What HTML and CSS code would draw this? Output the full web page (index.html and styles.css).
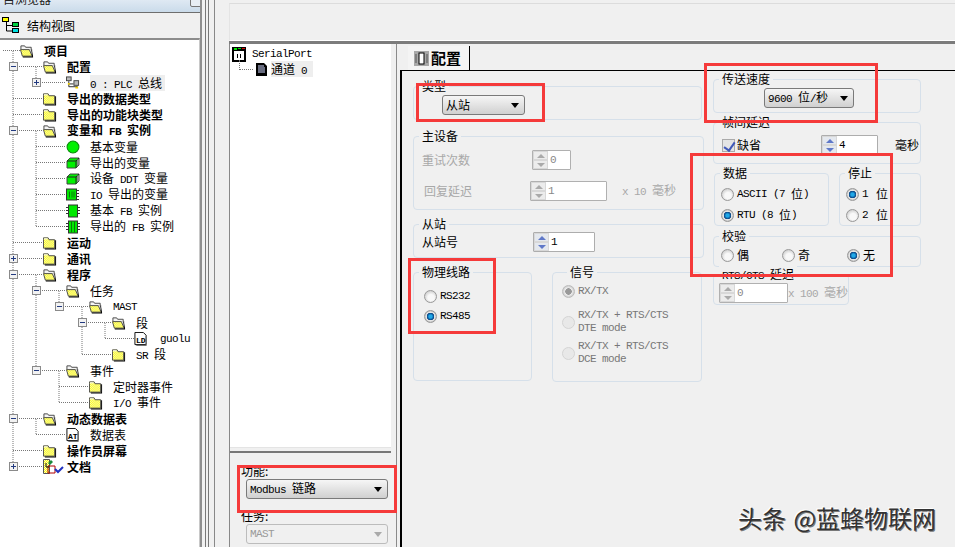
FILE: index.html
```html
<!DOCTYPE html>
<html lang="zh">
<head>
<meta charset="utf-8">
<title>SerialPort 配置</title>
<link rel="stylesheet" href="styles.css">
</head>
<body>
<svg class="defs" aria-hidden="true">
  <defs>
    <pattern id="dith" width="2" height="2" patternUnits="userSpaceOnUse">
      <rect width="2" height="2" fill="#ffff00"/>
      <rect width="1" height="1" fill="#f4f4d0"/>
      <rect x="1" y="1" width="1" height="1" fill="#f4f4d0"/>
    </pattern>
    <symbol id="fc" viewBox="0 0 15 14">
      <path d="M0.500 3.500V1.500h5l1 2h6v9h-12z" fill="url(#dith)" stroke="#444"/>
      <path d="M1 2.500h4" stroke="#fff"/>
      <path d="M14 4v10H2v-1h11V4z" fill="#000"/>
    </symbol>
    <symbol id="fo" viewBox="0 0 15 14">
      <path d="M1 5V1.500h4l1 1.500h6v3" fill="#f4f4f4" stroke="#444"/>
      <path d="M0.500 5.500h9.500l3 7H2.500z" fill="url(#dith)" stroke="#444"/>
      <path d="M13 5v2l1 6v1H3v-1h10l-1-7z" fill="#000"/>
    </symbol>
    <symbol id="ball" viewBox="0 0 13 13">
      <circle cx="6.500" cy="6.500" r="5.500" fill="#00f000" stroke="#0a8a0a"/>
    </symbol>
    <symbol id="cube" viewBox="0 0 14 13">
      <path d="M1 4.500 4 1.500h9v7l-3 3H1z" fill="#00f000" stroke="#444"/>
      <path d="M1 4.500h9v7M10 4.500l3-3" fill="none" stroke="#222"/>
      <path d="M11 3h2v5l-2 2z" fill="#888"/>
    </symbol>
    <symbol id="io" viewBox="0 0 14 13">
      <rect x="0.500" y="0.500" width="10" height="11" fill="#00e800" stroke="#333"/>
      <path d="M3.500 3v6M6 3v6M8 3v6" stroke="#0a7a0a"/>
      <path d="M11 2h2M11 5h2M11 8h2M11 11h2" stroke="#333"/>
    </symbol>
    <symbol id="fb" viewBox="0 0 14 13">
      <rect x="2.500" y="0.500" width="9" height="12" fill="#00e800" stroke="#333"/>
      <path d="M0 3h2M0 6h2M0 9h2M12 3h2M12 6h2M12 9h2" stroke="#333"/>
    </symbol>
    <symbol id="fb2" viewBox="0 0 14 13">
      <rect x="2.500" y="0.500" width="9" height="12" fill="#00e800" stroke="#333"/>
      <path d="M5.500 1v11M8.500 1v11" stroke="#0a7a0a"/>
      <path d="M0 3h2M0 6h2M0 9h2M12 3h2M12 6h2M12 9h2" stroke="#333"/>
    </symbol>
    <symbol id="bus" viewBox="0 0 15 14">
      <rect x="0.500" y="0.500" width="5" height="4" fill="#bbb" stroke="#444"/>
      <rect x="8.500" y="4.500" width="5" height="5" fill="#bbb" stroke="#444"/>
      <path d="M3 5v6h9V10M3 8h5" fill="none" stroke="#222"/>
      <path d="M2 7h2v2H2zM10 11h3v2h-3z" fill="#f2d000"/>
    </symbol>
    <symbol id="doc" viewBox="0 0 14 15">
      <path d="M0.500 0.500h9l3 3v10h-12z" fill="#fff" stroke="#000"/>
      <path d="M13 4v11H2v-1h10V4z" fill="#777"/>
    </symbol>
    <symbol id="docs" viewBox="0 0 21 16">
      <path d="M0.500 0.500h6v14h-6z" fill="url(#dith)" stroke="#555"/>
      <path d="M5 4l3-3 2 2-3 3z" fill="#1a8a3a"/>
      <path d="M5 7h7v7H5z" fill="none" stroke="#b00000"/>
      <path d="M12 10l3 3 5-5" fill="none" stroke="#2030c0" stroke-width="2"/>
      <path d="M3 4v4h3" fill="none" stroke="#111"/>
    </symbol>
  </defs>
</svg>

<div class="app">
  <aside class="browser">
    <header class="browser-title">
      <span class="browser-title-text">目浏览器</span>
      <span class="title-btn"></span>
    </header>
    <div class="view-bar">
      <svg class="view-icon" viewBox="0 0 18 18" width="18" height="18">
        <path d="M4.500 5v9h6M4.500 8.500h6" fill="none" stroke="#000"/>
        <rect x="0.500" y="0.500" width="6" height="4" fill="#ffff00" stroke="#000"/>
        <rect x="10.500" y="5.500" width="6" height="4" fill="#00d040" stroke="#000"/>
        <rect x="10.500" y="11.500" width="6" height="4" fill="#00e0e0" stroke="#000"/>
      </svg>
      <span>结构视图</span>
    </div>
    <div class="tree">
      <svg class="tree-lines" width="200" height="480" viewBox="0 38 200 480">
        <path d="M13 51V467M3 50.500H20
          M13 66.500H43M13 98.500H43M13 114.500H43M13 130.500H43M13 242.500H43M13 258.500H43M13 274.500H43M13 418.500H43M13 450.500H43M13 466.500H43
          M36 67V83M36 82.500H66
          M36 131V227M36 146.500H66M36 162.500H66M36 178.500H66M36 194.500H66M36 210.500H66M36 226.500H66
          M36 275V371M36 290.500H66M36 370.500H66
          M36 419V435M36 434.500H66
          M59 291V307M59 306.500H89
          M59 371V403M59 386.500H89M59 402.500H89
          M82 307V355M82 322.500H112M82 354.500H112
          M105 323V339M105 338.500H134" fill="none" stroke="#777" stroke-dasharray="1 1"/>
      </svg>
      <div class="node l0 strong"><svg class="ico"><use href="#fo"/></svg><span>项目</span></div>
      <div class="node l1 strong"><i class="exp minus"></i><svg class="ico"><use href="#fo"/></svg><span>配置</span></div>
      <div class="node l2"><i class="exp plus"></i><svg class="ico"><use href="#bus"/></svg><span class="sel"><span class="m">0 : PLC </span>总线</span></div>
      <div class="node l1 strong"><svg class="ico"><use href="#fc"/></svg><span>导出的数据类型</span></div>
      <div class="node l1 strong"><svg class="ico"><use href="#fc"/></svg><span>导出的功能块类型</span></div>
      <div class="node l1 strong"><i class="exp minus"></i><svg class="ico"><use href="#fo"/></svg><span>变量和<span class="m"> FB </span>实例</span></div>
      <div class="node l2"><svg class="ico"><use href="#ball"/></svg><span>基本变量</span></div>
      <div class="node l2"><svg class="ico"><use href="#cube"/></svg><span>导出的变量</span></div>
      <div class="node l2"><svg class="ico"><use href="#cube"/></svg><span>设备<span class="m"> DDT </span>变量</span></div>
      <div class="node l2"><svg class="ico"><use href="#io"/></svg><span><span class="m">IO </span>导出的变量</span></div>
      <div class="node l2"><svg class="ico"><use href="#fb"/></svg><span>基本<span class="m"> FB </span>实例</span></div>
      <div class="node l2"><svg class="ico"><use href="#fb2"/></svg><span>导出的<span class="m"> FB </span>实例</span></div>
      <div class="node l1 strong"><svg class="ico"><use href="#fc"/></svg><span>运动</span></div>
      <div class="node l1 strong"><i class="exp plus"></i><svg class="ico"><use href="#fc"/></svg><span>通讯</span></div>
      <div class="node l1 strong"><i class="exp minus"></i><svg class="ico"><use href="#fo"/></svg><span>程序</span></div>
      <div class="node l2"><i class="exp minus"></i><svg class="ico"><use href="#fo"/></svg><span>任务</span></div>
      <div class="node l3"><i class="exp minus"></i><svg class="ico"><use href="#fo"/></svg><span class="m">MAST</span></div>
      <div class="node l4"><i class="exp minus"></i><svg class="ico"><use href="#fo"/></svg><span>段</span></div>
      <div class="node l5"><svg class="ico"><use href="#doc"/><text class="doc-tag" x="2" y="11">LD</text></svg><span class="m leaf">guolu</span></div>
      <div class="node l4"><svg class="ico"><use href="#fc"/></svg><span><span class="m">SR </span>段</span></div>
      <div class="node l2"><i class="exp minus"></i><svg class="ico"><use href="#fo"/></svg><span>事件</span></div>
      <div class="node l3"><svg class="ico"><use href="#fc"/></svg><span>定时器事件</span></div>
      <div class="node l3"><svg class="ico"><use href="#fc"/></svg><span><span class="m">I/O </span>事件</span></div>
      <div class="node l1 strong"><i class="exp minus"></i><svg class="ico"><use href="#fo"/></svg><span>动态数据表</span></div>
      <div class="node l2"><svg class="ico"><use href="#doc"/><text class="doc-tag" x="2" y="11">AT</text></svg><span>数据表</span></div>
      <div class="node l1 strong"><svg class="ico"><use href="#fc"/></svg><span>操作员屏幕</span></div>
      <div class="node l1 strong"><i class="exp plus"></i><svg class="ico ico-wide"><use href="#docs"/></svg><span class="docs-label">文档</span></div>
    </div>
  </aside>

  <div class="splitter"></div>

  <main class="workspace">
    <div class="top-panel"></div>
    <div class="editor">
      <div class="side">
        <div class="port-tree">
          <div class="port-root">
            <svg class="port-icon" viewBox="0 0 14 15" width="14" height="15">
              <rect width="14" height="15" fill="#000"/>
              <rect x="2" y="4" width="10" height="9" fill="#fff"/>
              <path d="M2 1h3v2H2z" fill="#00e000"/><path d="M6 1h3v1H6z" fill="#00e000"/><path d="M10 1h3v1h-3z" fill="#e00000"/>
              <path d="M5 7h1v4H5zM8 7h1v4H8z" fill="#000"/>
            </svg>
            <span class="m">SerialPort</span>
          </div>
          <div class="port-channel">
            <span class="port-link"></span>
            <svg class="channel-icon" viewBox="0 0 11 13" width="11" height="13">
              <path d="M0 0h8l3 3v10H0z" fill="#000"/>
              <path d="M2 3h6M2 5h7M2 7h7M2 9h7" stroke="#d0d8ff"/>
            </svg>
            <span class="sel channel-label">通道<span class="m"> 0</span></span>
          </div>
        </div>
        <div class="side-form">
          <div class="side-label">功能:</div>
          <div class="select wide"><span><span class="m">Modbus </span>链路</span><b class="caret"></b></div>
          <div class="side-label task-label">任务:</div>
          <div class="select wide off"><span class="m">MAST</span><b class="caret"></b></div>
        </div>
      </div>

      <section class="main">
        <div class="tabs">
          <div class="tab">
            <svg class="tab-icon" viewBox="0 0 15 15" width="15" height="15">
              <rect width="15" height="15" fill="#a8a8a8"/>
              <rect x="5" y="2" width="5" height="11" fill="#fff" stroke="#000"/>
              <path d="M2 3v9M13 3v9" stroke="#555"/>
            </svg>
            <span>配置</span>
          </div>
        </div>
        <div class="page">
          <div class="col col-a">
            <div class="group g-type">
              <div class="g-title">类型</div>
              <div class="select type-select"><span>从站</span><b class="caret"></b></div>
            </div>
            <div class="group g-master">
              <div class="g-title">主设备</div>
              <div class="line retry-line">
                <span class="muted retry-label">重试次数</span>
                <div class="spin off s-retry"><div class="spin-btns"><i class="up"></i><i class="down"></i></div><span class="m">0</span></div>
              </div>
              <div class="line delay-line">
                <span class="muted delay-label">回复延迟</span>
                <div class="spin off s-delay"><div class="spin-btns"><i class="up"></i><i class="down"></i></div><span class="m">1</span></div>
                <span class="muted delay-unit"><span class="m">x 10 </span>毫秒</span>
              </div>
            </div>
            <div class="group g-slave">
              <div class="g-title">从站</div>
              <div class="line slave-line">
                <span class="slave-label">从站号</span>
                <div class="spin s-slave"><div class="spin-btns"><i class="up"></i><i class="down"></i></div><span class="m">1</span></div>
              </div>
            </div>
            <div class="duo">
              <div class="group g-line">
                <div class="g-title">物理线路</div>
                <div class="opts">
                  <label class="opt"><i class="radio"></i><span class="m">RS232</span></label>
                  <label class="opt"><i class="radio on"></i><span class="m">RS485</span></label>
                </div>
              </div>
              <div class="group g-signal">
                <div class="g-title">信号</div>
                <label class="opt muted-dark"><i class="radio dim"></i><span class="m">RX/TX</span></label>
                <label class="opt muted-dark two s2"><i class="radio blank"></i><span class="m">RX/TX + RTS/CTS<br>DTE mode</span></label>
                <label class="opt muted-dark two s3"><i class="radio blank"></i><span class="m">RX/TX + RTS/CTS<br>DCE mode</span></label>
              </div>
            </div>
          </div>

          <div class="col col-b">
            <div class="group g-speed">
              <div class="g-title">传送速度</div>
              <div class="select speed-select"><span><span class="m">9600 </span>位<span class="m">/</span>秒</span><b class="caret"></b></div>
            </div>
            <div class="group g-frame">
              <div class="g-title">帧间延迟</div>
              <div class="line frame-line">
                <i class="check"></i><span class="frame-default">缺省</span>
                <div class="spin s-frame"><div class="spin-btns"><i class="up"></i><i class="down"></i></div><span class="m">4</span></div>
                <span class="frame-unit">毫秒</span>
              </div>
            </div>
            <div class="pair">
              <div class="group g-data">
                <div class="g-title">数据</div>
                <div class="opts tight">
                  <label class="opt"><i class="radio"></i><span class="m">ASCII (7 </span><span>位</span><span class="m">)</span></label>
                  <label class="opt"><i class="radio on"></i><span class="m">RTU (8 </span><span>位</span><span class="m">)</span></label>
                </div>
              </div>
              <div class="group g-stop">
                <div class="g-title">停止</div>
                <div class="opts tight">
                  <label class="opt"><i class="radio on"></i><span class="m stop-num">1 </span><span>位</span></label>
                  <label class="opt"><i class="radio"></i><span class="m stop-num">2 </span><span>位</span></label>
                </div>
              </div>
            </div>
            <div class="group g-parity">
              <div class="g-title">校验</div>
              <div class="parity">
                <label class="opt"><i class="radio"></i><span>偶</span></label>
                <label class="opt"><i class="radio"></i><span>奇</span></label>
                <label class="opt"><i class="radio on"></i><span>无</span></label>
              </div>
            </div>
            <div class="group g-rts">
              <div class="g-title"><span class="m">RTS/CTS </span>延迟</div>
              <div class="line rts-line">
                <div class="spin off s-rts"><div class="spin-btns"><i class="up"></i><i class="down"></i></div><span class="m">0</span></div>
                <span class="muted"><span class="m">x 100 </span>毫秒</span>
              </div>
            </div>
          </div>
        </div>
      </section>
    </div>
  </main>
</div>

<div class="mark m-type"></div>
<div class="mark m-speed"></div>
<div class="mark m-data"></div>
<div class="mark m-line"></div>
<div class="mark m-func"></div>
<div class="watermark">头条 @蓝蜂物联网</div>
</body>
</html>
```

FILE: styles.css
```css
* { box-sizing: border-box; }
html, body { margin: 0; height: 100%; }
body {
  width: 955px; height: 547px; position: relative; overflow: hidden;
  background: #f0f0f0; color: #000;
  font: 12px/16px "Noto Sans CJK SC", "Liberation Sans", sans-serif;
}
.defs { position: absolute; width: 0; height: 0; }
.m { font-family: "Liberation Mono", "Noto Sans CJK SC", monospace; font-size: 11px; letter-spacing: -0.6px; white-space: pre; }
.app { display: flex; height: 547px; }

/* project browser */
.browser { width: 202px; flex: none; display: flex; flex-direction: column; border-right: 2px solid #8e8e8e; }
.browser-title {
  height: 13px; flex: none; position: relative; overflow: hidden;
  background: linear-gradient(#dfe9f3, #cadbea); border-bottom: 1px solid #6e6e6e;
}
.browser-title-text { position: absolute; left: 3px; top: -9px; color: #222; font-size: 12px; }
.title-btn { position: absolute; left: 190px; top: -4px; width: 13px; height: 11px; border: 1px solid #777; background: #e8eef4; border-radius: 2px; }
.view-bar { height: 25px; flex: none; display: flex; align-items: center; padding-left: 2px; background: #f0f0f0; }
.view-icon { margin-right: 7px; }
.tree { flex: 1; position: relative; background: #fff; border-top: 2px solid #8c8c8c; border-right: 1px solid #c8c8c8; padding-top: 3px; }
.tree-lines { position: absolute; left: 0; top: -2px; }
.node { height: 16px; display: flex; align-items: center; position: relative; white-space: nowrap; }
.node.strong { font-weight: 700; }
.node.strong .m { font-weight: 700; }
.l0 { padding-left: 20px; } .l1 { padding-left: 43px; } .l2 { padding-left: 66px; }
.l3 { padding-left: 89px; } .l4 { padding-left: 112px; } .l5 { padding-left: 134px; }
.ico { width: 14px; height: 14px; flex: none; margin-right: 10px; }
.ico-wide { width: 21px; height: 16px; margin-right: 3px; }
.leaf { margin-left: 2px; }
.doc-tag { font: 700 8px "Liberation Mono", monospace; }
.sel { background: #eee; height: 16px; display: inline-block; padding-right: 3px; }
.exp { position: absolute; top: 3px; width: 9px; height: 9px; border: 1px solid #8a8a8a; background: #f2f2f2; margin-left: -34px; }
.exp::before { content: ""; position: absolute; left: 1px; top: 3px; width: 5px; height: 1px; background: #223a80; }
.exp.plus::after { content: ""; position: absolute; left: 3px; top: 1px; width: 1px; height: 5px; background: #223a80; }

/* splitter */
.splitter {
  width: 27px; flex: none;
  background: linear-gradient(90deg, #f0f0f0 0 3px, #777 3px 4px, #f0f0f0 4px 6px, #777 6px 7px, #f0f0f0 7px 12px, #888 12px 13px, #f0f0f0 13px);
}

/* workspace */
.workspace { flex: 1; min-width: 0; display: flex; flex-direction: column; padding-top: 3px; }
.top-panel { height: 38px; flex: none; border-top: 1px solid #dcdcdc; border-left: 1px solid #e4e4e4; border-bottom: 1px solid #fff; }
.editor { flex: 1; min-height: 0; display: flex; border-top: 3px solid #7c7c7c; }

.side { width: 162px; flex: none; margin-right: 5px; display: flex; flex-direction: column; border-left: 1px solid #888; }
.port-tree { height: 404px; flex: none; background: #fff; padding: 2px 0 0 2px; border-bottom: 1px solid #e4e4e4; }
.port-root { display: flex; align-items: center; height: 16px; }
.port-icon { margin-right: 6px; }
.port-channel { display: flex; align-items: center; height: 16px; margin-top: -1px; position: relative; }
.port-link { width: 14px; height: 10px; margin: -9px 0 0 7px; border-left: 1px dotted #777; border-bottom: 1px dotted #777; }
.channel-icon { margin-left: 3px; }
.channel-label { margin-left: 4px; padding-right: 0; width: 42px; }
.side-form { flex: 1; border-top: 2px solid #777; padding: 11px 0 0 16px; margin-top: 3px; }
.side-label { line-height: 14px; height: 14px; margin-left: -5px; }
.task-label { margin-top: 10px; }

.select {
  display: flex; align-items: center; justify-content: space-between; height: 20px; margin-top: 1px; padding: 0 5px 0 3px;
  border: 1px solid #7a7a7a; border-radius: 3px; background: linear-gradient(#f6f6f6, #d0d0d0);
  white-space: nowrap;
}
.select.wide { width: 142px; padding-left: 3px; }
.select.off { border-color: #bcbcbc; background: #f0f0f0; color: #999; }
.caret { width: 0; height: 0; border: 4px solid transparent; border-top: 5px solid #000; border-bottom: 0; }
.off .caret { border-top-color: #aaa; }

.main { flex: 1; min-width: 0; display: flex; flex-direction: column; border-left: 1px solid #8a8a8a; }
.tabs { height: 26px; flex: none; padding: 2px 0 0 11px; }
.tab { width: 62px; height: 24px; display: flex; align-items: center; padding-left: 6px; border-right: 1px solid #000; background: #f4f4f4; font: 700 15px/22px "Noto Sans CJK SC", sans-serif; }
.tab-icon { margin-right: 2px; }
.page { flex: 1; margin-left: 3px; border-top: 1px solid #000; border-left: 2px solid #000; display: flex; padding-left: 11px; }

.col-a { width: 291px; flex: none; margin-top: 15px; }
.col-b { width: 208px; flex: none; margin: 8px 0 0 9px; }
.group { border: 1px solid #d6e0ea; border-radius: 4px; }
.g-title { display: table; margin: -9px 0 1px 5px; padding: 0 3px; background: #f0f0f0; line-height: 16px; white-space: nowrap; }
.line { display: flex; align-items: center; height: 20px; }
.muted { color: #a8a8a8; }
.muted-dark { color: #777; }

.g-type { width: 289px; height: 34px; }
.type-select { width: 83px; margin: 0 0 0 28px; }
.g-master { margin-top: 16px; height: 74px; }
.retry-line { margin: 6px 0 0 8px; }
.retry-label { width: 110px; }
.delay-line { margin: 11px 0 0 10px; }
.delay-label { width: 106px; }
.delay-unit { margin-left: 15px; }
.g-slave { margin-top: 14px; height: 34px; }
.slave-line { margin: -1px 0 0 8px; }
.slave-label { width: 111px; }

.spin { display: flex; align-items: center; height: 20px; border: 1px solid #adadad; background: #fff; border-radius: 1px; }
.spin .m { margin-left: 2px; }
.spin-btns { width: 15px; height: 18px; display: flex; flex-direction: column; background: #e4e8ee; }
.spin-btns i { flex: 1; display: flex; align-items: center; justify-content: center; border: 1px solid #d8d8d8; }
.spin-btns i::before { content: ""; border: 4px solid transparent; }
.spin-btns .up::before { border-top: 0; border-bottom: 4px solid #5f78c8; }
.spin-btns .down::before { border-bottom: 0; border-top: 4px solid #5f78c8; }
.spin.off { border-color: #b0b0b0; }
.spin.off .m { color: #888; }
.spin.off .spin-btns { background: #ececec; }
.spin.off .up::before { border-bottom-color: #aaa; }
.spin.off .down::before { border-top-color: #aaa; }
.s-retry { width: 39px; }
.s-delay { width: 77px; }
.s-slave { width: 62px; }
.s-frame { width: 57px; margin-left: 60px; }
.s-rts { width: 69px; }

.duo { display: flex; gap: 20px; margin-top: 14px; }
.g-line { width: 119px; height: 109px; }
.g-signal { width: 150px; height: 110px; padding-left: 9px; }
.opts { padding-left: 10px; margin-top: 6px; }
.opts.tight { padding-left: 6px; margin-top: 3px; }
.opts.tight .opt + .opt { margin-top: 1px; }
.opt { display: flex; align-items: center; height: 20px; white-space: nowrap; }
.radio {
  width: 13px; height: 13px; flex: none; margin-right: 3px; border-radius: 50%;
  border: 1px solid #999; background: radial-gradient(circle at 55% 60%, #f8f8f8 0 35%, #c6c6c6 85%);
}
.radio.on { background: radial-gradient(circle, #20a8e8 0 1.500px, #063f80 3.500px, #e4e4e4 4px, #e4e4e4 4.500px, #b0b0b0 6px); }
.radio.dim { background: radial-gradient(circle, #999 0 3px, #eee 3.500px, #c8c8c8 6px); border-color: #bbb; }
.radio.blank { border-color: #d4d4d4; background: #e8e8e8; }
.two { height: 26px; line-height: 13px; }
.s2 { margin-top: 8px; }
.s3 { margin-top: 5px; }

.g-speed { height: 34px; }
.speed-select { width: 90px; margin: 0 0 0 50px; }
.g-frame { margin-top: 9px; height: 42px; }
.frame-line { margin: 5px 0 0 8px; }
.check { width: 13px; height: 13px; flex: none; margin-right: 2px; border: 1px solid #aaa; background: #e4e4e4; position: relative; }
.check::after { content: ""; position: absolute; left: 3px; top: 0; width: 5px; height: 9px; border: solid #4058b8; border-width: 0 2px 2px 0; transform: rotate(35deg); }
.frame-default { width: 24px; }
.frame-unit { margin-left: 17px; }
.pair { display: flex; gap: 10px; margin: 9px 0 0 1px; }
.g-data { width: 115px; height: 53px; }
.g-stop { width: 82px; height: 53px; }
.stop-num { margin-right: 2px; }
.g-parity { margin-top: 10px; height: 31px; }
.parity { display: grid; grid-template-columns: 61px 65px auto; padding-left: 7px; }
.g-rts { margin-top: 7px; width: 136px; height: 31px; }
.rts-line { margin: -2px 0 0 5px; }

/* annotations laid over the screenshot */
.mark { position: absolute; border: 3px solid #f53a3a; }
.m-type { left: 416px; top: 83px; width: 129px; height: 39px; }
.m-speed { left: 704px; top: 63px; width: 174px; height: 60px; }
.m-data { left: 690px; top: 153px; width: 203px; height: 124px; }
.m-line { left: 408px; top: 258px; width: 88px; height: 76px; }
.m-func { left: 237px; top: 465px; width: 160px; height: 48px; }
.watermark {
  position: absolute; left: 738px; top: 503px; font-size: 24px; line-height: 30px; word-spacing: 2px; color: #333; white-space: nowrap;
  text-shadow: -1px -1px 0 #fff, 1px 1px 0 #777;
}
```
